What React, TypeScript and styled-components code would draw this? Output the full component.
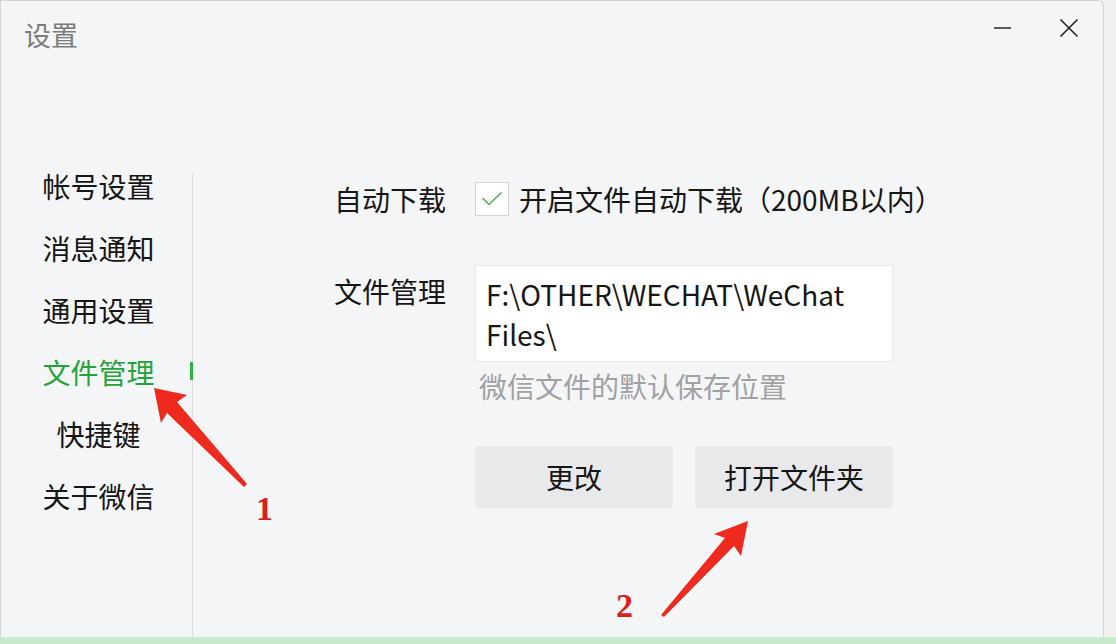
import React from "react";
import styled, { createGlobalStyle } from "styled-components";

const GlobalStyle = createGlobalStyle`
  html, body {
    margin: 0;
    padding: 0;
    width: 1116px;
    height: 644px;
    overflow: hidden;
    background: #eef0ef;
    font-family: "Noto Sans CJK SC", "Noto Sans", sans-serif;
  }
  * { box-sizing: border-box; }
`;

// STYLED COMPONENTS
const Screen = styled.div`
  position: relative;
  width: 1116px;
  height: 644px;
  display: flex;
  flex-direction: column;
`;

const Desk = styled.div`
  display: flex;
  height: 637px;
`;

const Window = styled.div`
  width: 1104px;
  height: 100%;
  background: #f4f5f7;
  border: 1px solid #d2d4d6;
  border-bottom: none;
  border-top-right-radius: 6px;
  display: flex;
  flex-direction: column;
`;

const SideStrip = styled.div`
  flex: 1;
  background: #eff1f0;
`;

const BottomStrip = styled.div`
  flex: 1;
  background: #c9ebcc;
`;

const Header = styled.div`
  height: 154px;
  display: flex;
  justify-content: space-between;
  align-items: flex-start;
  padding: 15px 24px 0 23px;
`;

const Title = styled.div`
  font-size: 27px;
  line-height: 38px;
  color: #7b7b7d;
`;

const Controls = styled.div`
  display: flex;
  align-items: center;
  gap: 46px;
  padding-top: 2px;
`;

const CtrlButton = styled.div`
  width: 20px;
  height: 20px;
  display: flex;
  align-items: center;
  justify-content: center;
`;

const Body = styled.div`
  flex: 1;
  display: flex;
`;

const Nav = styled.div`
  width: 191px;
  padding-left: 4px;
  display: flex;
  flex-direction: column;
`;

const NavItem = styled.div<{ $active?: boolean }>`
  position: relative;
  height: 62px;
  display: flex;
  align-items: center;
  justify-content: center;
  font-size: 28px;
  color: ${(p) => (p.$active ? "#23a33a" : "#161616")};

  &::after {
    content: "";
    display: ${(p) => (p.$active ? "block" : "none")};
    position: absolute;
    right: -1px;
    top: 21px;
    width: 3px;
    height: 18px;
    background: #2cb53f;
  }
`;

const Divider = styled.div`
  width: 1px;
  margin-top: 18px;
  background: #dcdddf;
`;

const Content = styled.div`
  flex: 1;
  display: flex;
  flex-direction: column;
  padding-left: 141px;
  padding-top: 24px;
`;

const Row = styled.div<{ $top?: boolean; $gap?: number }>`
  display: flex;
  align-items: ${(p) => (p.$top ? "flex-start" : "center")};
  margin-top: ${(p) => p.$gap ?? 0}px;
`;

const Label = styled.div<{ $pad?: number }>`
  width: 141px;
  font-size: 28px;
  line-height: 40px;
  color: #161616;
  padding-top: ${(p) => p.$pad ?? 0}px;
`;

const CheckBox = styled.div`
  width: 34px;
  height: 34px;
  background: #fff;
  border: 1px solid #d3d5d7;
  display: flex;
  align-items: center;
  justify-content: center;
`;

const CheckText = styled.div`
  margin-left: 10px;
  font-size: 28px;
  line-height: 40px;
  color: #161616;
`;

const PathBox = styled.div`
  width: 418px;
  height: 97px;
  background: #fff;
  border: 1px solid #e6e7e9;
  padding: 8px 10px 0;
  font-size: 28px;
  line-height: 40px;
  color: #161616;
`;

const Hint = styled.div`
  margin: 4px 0 0 145px;
  font-size: 28px;
  line-height: 40px;
  color: #a0a1a3;
`;

const Buttons = styled.div`
  display: flex;
  gap: 22px;
  margin: 40px 0 0 141px;
`;

const Button = styled.div`
  width: 198px;
  height: 62px;
  border-radius: 4px;
  background: #e8e9eb;
  display: flex;
  align-items: center;
  justify-content: center;
  font-size: 28px;
  color: #161616;
`;

const Overlay = styled.svg`
  position: absolute;
  inset: 0;
  pointer-events: none;
`;

const Mark = styled.span<{ $x: number; $y: number }>`
  position: absolute;
  left: ${(p) => p.$x}px;
  top: ${(p) => p.$y}px;
  font-family: "Liberation Serif", "DejaVu Serif", serif;
  font-weight: bold;
  font-size: 34px;
  line-height: 34px;
  color: #d8201c;
`;

const navItems = ["帐号设置", "消息通知", "通用设置", "文件管理", "快捷键", "关于微信"];

export default function App() {
  return (
    <>
      <GlobalStyle />
      <Screen>
        <Desk>
          <Window>
            <Header>
              <Title>设置</Title>
              <Controls>
                <CtrlButton>
                  <svg width="20" height="20" viewBox="0 0 20 20">
                    <line x1="1" y1="10" x2="18" y2="10" stroke="#333" strokeWidth="1.6" />
                  </svg>
                </CtrlButton>
                <CtrlButton>
                  <svg width="20" height="20" viewBox="0 0 20 20">
                    <path d="M1.5 1.5 L18.5 18.5 M18.5 1.5 L1.5 18.5" stroke="#222" strokeWidth="1.6" />
                  </svg>
                </CtrlButton>
              </Controls>
            </Header>

            <Body>
              <Nav>
                {navItems.map((item) => (
                  <NavItem key={item} $active={item === "文件管理"}>
                    {item}
                  </NavItem>
                ))}
              </Nav>
              <Divider />

              <Content>
                <Row>
                  <Label>自动下载</Label>
                  <CheckBox>
                    <svg width="22" height="16" viewBox="0 0 22 16">
                      <path d="M1.5 7 L8 13.5 L20.5 1.5" fill="none" stroke="#4fae5a" strokeWidth="1.6" />
                    </svg>
                  </CheckBox>
                  <CheckText>开启文件自动下载（200MB以内）</CheckText>
                </Row>

                <Row $top $gap={46}>
                  <Label $pad={6}>文件管理</Label>
                  <PathBox>F:\OTHER\WECHAT\WeChat Files\</PathBox>
                </Row>

                <Hint>微信文件的默认保存位置</Hint>

                <Buttons>
                  <Button>更改</Button>
                  <Button>打开文件夹</Button>
                </Buttons>
              </Content>
            </Body>
          </Window>
          <SideStrip />
        </Desk>
        <BottomStrip />

        <Overlay width="1116" height="644" viewBox="0 0 1116 644">
          <polygon
            points="154,388 187,395 177,402 247,484 244,487 167,413 161,423"
            fill="#ee2a1f"
          />
          <polygon
            points="748,521 741,556 734,546 664,617 661,615 725,538 714,534"
            fill="#ee2a1f"
          />
        </Overlay>
        <Mark $x={256} $y={492}>1</Mark>
        <Mark $x={616} $y={589}>2</Mark>
      </Screen>
    </>
  );
}
